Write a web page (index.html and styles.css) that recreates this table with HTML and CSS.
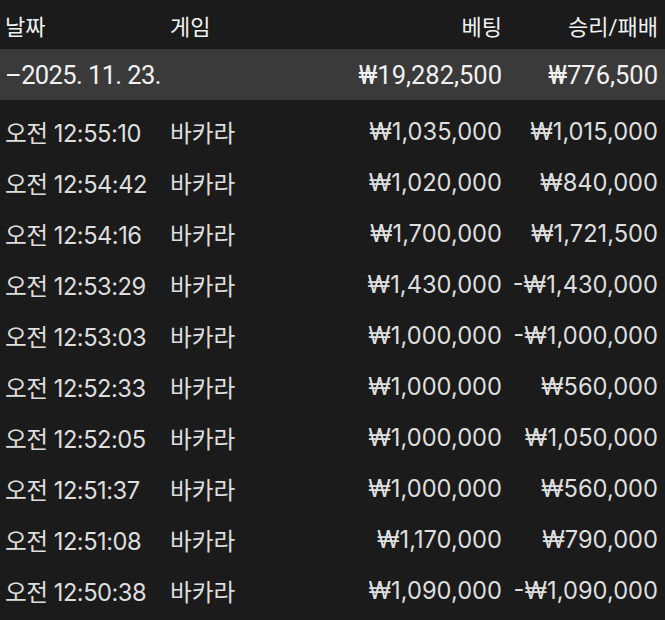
FILE: index.html
```html
<!DOCTYPE html>
<html lang="ko">
<head>
<meta charset="utf-8">
<link rel="stylesheet" href="styles.css">
</head>
<body>
<div class="table">
  <div class="row head">
    <div class="c-date">날짜</div>
    <div class="c-game">게임</div>
    <div class="c-bet">베팅</div>
    <div class="c-win">승리/패배</div>
  </div>
  <div class="row summary">
    <div class="c-date">–2025. 11. 23.</div>
    <div class="c-game"></div>
    <div class="c-bet">₩19,282,500</div>
    <div class="c-win">₩776,500</div>
  </div>
  <div class="body">
    <div class="row item"><div class="c-date">오전 12:55:10</div><div class="c-game">바카라</div><div class="c-bet">₩1,035,000</div><div class="c-win">₩1,015,000</div></div>
    <div class="row item"><div class="c-date">오전 12:54:42</div><div class="c-game">바카라</div><div class="c-bet">₩1,020,000</div><div class="c-win">₩840,000</div></div>
    <div class="row item"><div class="c-date">오전 12:54:16</div><div class="c-game">바카라</div><div class="c-bet">₩1,700,000</div><div class="c-win">₩1,721,500</div></div>
    <div class="row item"><div class="c-date">오전 12:53:29</div><div class="c-game">바카라</div><div class="c-bet">₩1,430,000</div><div class="c-win">-₩1,430,000</div></div>
    <div class="row item"><div class="c-date">오전 12:53:03</div><div class="c-game">바카라</div><div class="c-bet">₩1,000,000</div><div class="c-win">-₩1,000,000</div></div>
    <div class="row item"><div class="c-date">오전 12:52:33</div><div class="c-game">바카라</div><div class="c-bet">₩1,000,000</div><div class="c-win">₩560,000</div></div>
    <div class="row item"><div class="c-date">오전 12:52:05</div><div class="c-game">바카라</div><div class="c-bet">₩1,000,000</div><div class="c-win">₩1,050,000</div></div>
    <div class="row item"><div class="c-date">오전 12:51:37</div><div class="c-game">바카라</div><div class="c-bet">₩1,000,000</div><div class="c-win">₩560,000</div></div>
    <div class="row item"><div class="c-date">오전 12:51:08</div><div class="c-game">바카라</div><div class="c-bet">₩1,170,000</div><div class="c-win">₩790,000</div></div>
    <div class="row item"><div class="c-date">오전 12:50:38</div><div class="c-game">바카라</div><div class="c-bet">₩1,090,000</div><div class="c-win">-₩1,090,000</div></div>
  </div>
</div>
</body>
</html>
```
FILE: styles.css
```css
html, body {
  margin: 0;
  padding: 0;
  background: #1b1b1b;
  height: 100%;
  overflow: hidden;
}
.table {
  font-family: Inter, "Noto Sans CJK KR", sans-serif;
  color: #dedede;
  font-size: 23.7px;
}
.row {
  display: grid;
  grid-template-columns: 165px 1fr 170px 156px;
  align-items: center;
  padding: 0 7px 0 5px;
  white-space: nowrap;
}
.c-bet, .c-win { text-align: right; }
.item .c-date { letter-spacing: -0.5px; }
.summary .c-date { letter-spacing: -0.6px; }
.head {
  height: 49px;
  color: #f2f2f2;
  font-family: Roboto, "Noto Sans CJK KR", sans-serif;
  font-size: 22px;
}
.summary {
  height: 51px;
  background: #3a3a3a;
  color: #f2f2f2;
  font-family: Roboto, "Noto Sans CJK KR", sans-serif;
  font-size: 25.5px;
}
.body {
  padding-top: 6px;
}
.item {
  height: 51px;
}
```
